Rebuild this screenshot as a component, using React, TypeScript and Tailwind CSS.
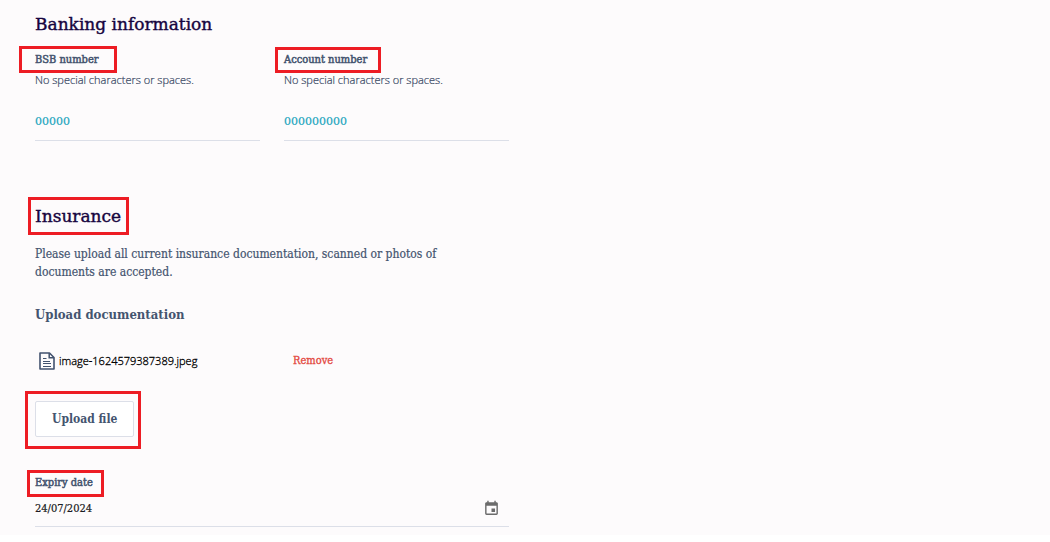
import type { ReactNode } from "react";
import { MdInsertInvitation } from "react-icons/md";

const slab = "font-['DejaVu_Serif_Condensed','DejaVu_Serif',serif]";
const slabWide = "font-['DejaVu_Serif',serif]";
const sans = "font-['Open_Sans',sans-serif]";
const heading = `${slabWide} text-[17px] text-[#17053f] [-webkit-text-stroke:0.4px]`;
const fieldLabel = `${slab} block text-[11px] leading-5 text-[#44546f] [-webkit-text-stroke:0.5px]`;

function Highlight({ className, children }: { className: string; children: ReactNode }) {
  return (
    <span className="relative inline-block">
      {children}
      <span
        aria-hidden="true"
        className={`pointer-events-none absolute border-3 border-[#ed1c24] ${className}`}
      />
    </span>
  );
}

function BankField({
  id,
  label,
  value,
  box,
}: {
  id: string;
  label: string;
  value: string;
  box: string;
}) {
  return (
    <div className="min-w-0">
      <div className="flex h-5 items-center">
        <Highlight className={box}>
          <label htmlFor={id} className={fieldLabel}>
            {label}
          </label>
        </Highlight>
      </div>
      <p
        id={`${id}-hint`}
        className={`${sans} text-[11px] leading-5 font-light text-[#34445f] [-webkit-text-stroke:0.2px]`}
      >
        No special characters or spaces.
      </p>
      <input
        id={id}
        aria-describedby={`${id}-hint`}
        defaultValue={value}
        className={`${slabWide} mt-3 h-[39px] w-full border-b border-[#dcdfe8] bg-transparent text-[11px] text-[#1ba5bd] outline-none [-webkit-text-stroke:0.2px]`}
      />
    </div>
  );
}

function DocumentIcon() {
  return (
    <svg width="16" height="18" viewBox="0 0 16 18" fill="none" stroke="#42526e" aria-hidden="true">
      <path d="M1 1h9.5L15 5.5V17H1z" strokeWidth="1.6" strokeLinejoin="round" />
      <path d="M10.2 1v4.8H15" strokeWidth="1.5" />
      <path d="M4 6.5h3.5M4 9.5h7M4 11.5h8M4 14.5h8" strokeWidth="1.2" />
    </svg>
  );
}

export default function App() {
  return (
    <main className="bg-[#fdfbfc] px-[35px] pt-3 pb-2">
      <form className="w-full max-w-[474px]" onSubmit={(e) => e.preventDefault()}>
        <section>
          <h2 className={`${heading} leading-6`}>Banking information</h2>
          <div className="mt-[14px] grid grid-cols-2 gap-6">
            <BankField id="bsb" label="BSB number" value="00000" box="-top-1 -right-[18px] -bottom-[3px] -left-4" />
            <BankField
              id="account"
              label="Account number"
              value="000000000"
              box="-top-[3px] -right-[14px] -bottom-[3px] -left-[9px]"
            />
          </div>
        </section>

        <section className="mt-[60px]">
          <h2 className={`${heading} flex leading-[30px]`}>
            <Highlight className="-top-1 -right-2 -bottom-1 -left-[7px]">Insurance</Highlight>
          </h2>
          <p className={`${slab} mt-[14px] max-w-[440px] text-xs leading-[18px] text-[#44546f] [-webkit-text-stroke:0.2px]`}>
            Please upload all current insurance documentation, scanned or photos of documents are accepted.
          </p>
          <h3 className={`${slab} mt-6 text-[13px] leading-5 font-bold text-[#44546f]`}>
            Upload documentation
          </h3>

          <div className="mt-[26px] flex h-5 items-center pl-1">
            <div className="flex w-[254px] items-center gap-1">
              <DocumentIcon />
              <span
                className={`${sans} text-[11px] leading-5 font-light text-black [-webkit-text-stroke:0.3px]`}
              >
                image-1624579387389.jpeg
              </span>
            </div>
            <button
              type="button"
              className={`${slab} text-[11px] text-[#e3483f] [-webkit-text-stroke:0.3px]`}
            >
              Remove
            </button>
          </div>

          <div className="mt-[30px] flex">
            <Highlight className="-top-[10px] -right-[7px] -bottom-3 -left-[10px]">
              <button
                type="button"
                className={`${slab} block h-9 rounded-xs border border-[#dcdfe8] bg-white px-4 text-xs font-bold text-[#44546f]`}
              >
                Upload file
              </button>
            </Highlight>
          </div>

          <div className="mt-9">
            <div className="flex h-5 items-center">
              <Highlight className="-top-[3px] -right-[11px] -bottom-1 -left-2">
                <label htmlFor="expiry" className={fieldLabel}>
                  Expiry date
                </label>
              </Highlight>
            </div>
            <div className="flex h-[34px] items-start border-b border-[#dcdfe8]">
              <input
                id="expiry"
                defaultValue="24/07/2024"
                className={`${slab} h-[30px] min-w-0 flex-1 bg-transparent text-[11px] text-[#1b1b22] outline-none [-webkit-text-stroke:0.2px]`}
              />
              <button type="button" aria-label="Choose date" className="mt-[7px] mr-[9px] text-[#6b6b6b]">
                <MdInsertInvitation size={17} />
              </button>
            </div>
          </div>
        </section>
      </form>
    </main>
  );
}
